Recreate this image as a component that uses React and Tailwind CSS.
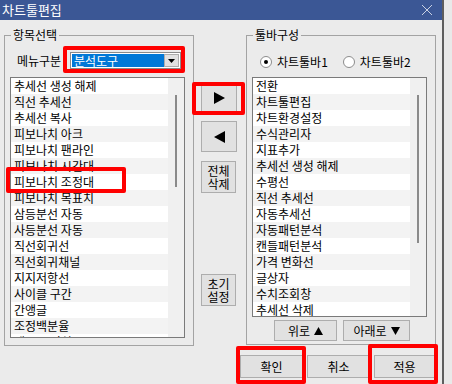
const leftItems = [
  "추세선 생성 해제",
  "직선 추세선",
  "추세선 복사",
  "피보나치 아크",
  "피보나치 팬라인",
  "피보나치 시간대",
  "피보나치 조정대",
  "피보나치 목표치",
  "삼등분선 자동",
  "사등분선 자동",
  "직선회귀선",
  "직선회귀채널",
  "지지저항선",
  "사이클 구간",
  "간앵글",
  "조정백분율",
  "앤드류 피치포크",
];

const rightItems = [
  "전환",
  "차트툴편집",
  "차트환경설정",
  "수식관리자",
  "지표추가",
  "추세선 생성 해제",
  "수평선",
  "직선 추세선",
  "자동추세선",
  "자동패턴분석",
  "캔들패턴분석",
  "가격 변화선",
  "글상자",
  "수치조회창",
  "추세선 삭제",
];

const cx = (...items) => items.filter(Boolean).join(" ");

function ListBox({ items, width, height, thumbTop, thumbHeight }) {
  return (
    <div
      className="flex overflow-hidden border border-[#7a7a7a] bg-white"
      style={{ width, height }}
    >
      <div className="flex min-w-0 flex-1 flex-col">
        {items.map((item, i) => (
          <div
            key={item + i}
            className={cx(
              "h-[16px] shrink-0 whitespace-pre pl-[3px] text-[12px] leading-[16px] text-black",
              i % 2 === 1 ? "bg-[#f3f3f3]" : "bg-white",
            )}
          >
            {item}
          </div>
        ))}
      </div>
      <div className="flex w-[16px] shrink-0 flex-col items-center bg-[#f0f0f0]">
        <div style={{ height: thumbTop }} />
        <div className="w-[2px] bg-[#8a8a8a]" style={{ height: thumbHeight }} />
      </div>
    </div>
  );
}

function Btn({ children, className }) {
  return (
    <div
      className={cx(
        "flex items-center justify-center border border-[#adadad] bg-[#e1e1e1] text-[12px] leading-[14px] text-black",
        className,
      )}
    >
      {children}
    </div>
  );
}

function TwoLine({ top, bottom, className }) {
  return (
    <Btn className={cx("h-[32px] w-[35px] flex-col", className)}>
      <span className="block h-[13px] leading-[13px]">{top}</span>
      <span className="block h-[13px] leading-[13px]">{bottom}</span>
    </Btn>
  );
}

function Radio({ checked, label }) {
  return (
    <div className="flex items-center gap-[5px]">
      <div className="flex h-[12px] w-[12px] items-center justify-center rounded-full border border-[#8c8c8c] bg-white">
        {checked && <div className="h-[4px] w-[4px] rounded-full bg-black" />}
      </div>
      <span className="text-[12px] leading-[14px]">{label}</span>
    </div>
  );
}

function RedBox({ className }) {
  return (
    <div
      className={cx(
        "pointer-events-none absolute rounded-[2px] border-[4px] border-[#ff0000]",
        className,
      )}
    />
  );
}

export default function App() {
  return (
    <div className="relative flex h-[384px] w-[452px] overflow-hidden bg-[#ececec] font-['Noto_Sans_CJK_KR','Noto_Sans',sans-serif] text-black">
      <div className="flex w-[442px] shrink-0 flex-col">
        <div className="flex h-[20px] items-center justify-between bg-[#3b5795] pl-[2px] pr-[9px]">
          <span className="text-[13px] leading-[16px] text-white">차트툴편집</span>
          <svg width="12" height="12" viewBox="0 0 12 12">
            <path d="M1 1L11 11M11 1L1 11" stroke="#c9d1e3" strokeWidth="1" />
          </svg>
        </div>

        <div className="flex flex-1 flex-col bg-[#ebebeb] pt-[15px]">
          <div className="flex">
            {/* left group */}
            <div className="relative ml-[4px] flex h-[311px] w-[190px] flex-col border border-[#a3a3a3] px-[5px] pt-[16px]">
              <span className="absolute left-[6px] top-[-9px] bg-[#ebebeb] px-[2px] text-[12px] leading-[16px]">
                항목선택
              </span>
              <div className="flex h-[17px] items-center pl-[7px]">
                <span className="w-[53px] text-[12px] leading-[14px]">메뉴구분</span>
                <div className="flex h-[17px] w-[111px] border border-[#8a8a8a] bg-white p-[1px]">
                  <div className="flex flex-1 items-center bg-[#0078d7] pl-[2px] text-[12px] leading-[13px] text-white">
                    분석도구
                  </div>
                  <div className="flex w-[15px] items-center justify-center border border-[#adadad] bg-[#e1e1e1]">
                    <svg width="7" height="4" viewBox="0 0 7 4">
                      <path d="M0 0H7L3.5 4Z" fill="#000" />
                    </svg>
                  </div>
                </div>
              </div>
              <div className="mt-[8px]">
                <ListBox items={leftItems} width={175} height={261} thumbTop={17} thumbHeight={92} />
              </div>
            </div>

            {/* middle buttons */}
            <div className="flex w-[52px] flex-col pl-[7px] pt-[47px]">
              <Btn className="h-[31px] w-[36px]">
                <svg width="11" height="12" viewBox="0 0 11 12">
                  <path d="M0 0L11 6L0 12Z" fill="#000" />
                </svg>
              </Btn>
              <Btn className="mt-[8px] h-[31px] w-[36px]">
                <svg width="11" height="12" viewBox="0 0 11 12">
                  <path d="M11 0L0 6L11 12Z" fill="#000" />
                </svg>
              </Btn>
              <TwoLine top="전체" bottom="삭제" className="mt-[9px]" />
              <TwoLine top="초기" bottom="설정" className="mt-[81px]" />
            </div>

            {/* right group */}
            <div className="relative flex h-[310px] w-[190px] flex-col border border-[#a3a3a3] px-[5px] pt-[19px]">
              <span className="absolute left-[6px] top-[-9px] bg-[#ebebeb] px-[2px] text-[12px] leading-[16px]">
                툴바구성
              </span>
              <div className="flex h-[14px] items-center gap-[15px] pl-[8px]">
                <Radio checked label="차트툴바1" />
                <Radio label="차트툴바2" />
              </div>
              <div className="mt-[8px]">
                <ListBox items={rightItems} width={175} height={240} thumbTop={17} thumbHeight={148} />
              </div>
              <div className="mt-[3px] flex gap-[6px] pl-[22px]">
                <Btn className="h-[21px] w-[63px] gap-[4px]">
                  <span>위로</span>
                  <svg width="9" height="8" viewBox="0 0 9 8">
                    <path d="M4.5 0L9 8H0Z" fill="#000" />
                  </svg>
                </Btn>
                <Btn className="h-[21px] w-[67px] gap-[4px]">
                  <span>아래로</span>
                  <svg width="9" height="8" viewBox="0 0 9 8">
                    <path d="M0 0H9L4.5 8Z" fill="#000" />
                  </svg>
                </Btn>
              </div>
            </div>
          </div>

          <div className="mt-[9px] flex gap-[4px] pl-[240px]">
            <Btn className="h-[23px] w-[63px]">확인</Btn>
            <Btn className="h-[23px] w-[63px]">취소</Btn>
            <Btn className="h-[23px] w-[61px]">적용</Btn>
          </div>
        </div>
      </div>
      <div className="w-[2px] shrink-0 bg-[#5e5e5e]" />
      <div className="flex-1 bg-[#e9e9e9]" />

      <RedBox className="left-[63px] top-[46px] h-[27px] w-[122px]" />
      <RedBox className="left-[192px] top-[82px] h-[33px] w-[53px]" />
      <RedBox className="left-[6px] top-[167px] h-[26px] w-[120px]" />
      <RedBox className="left-[236px] top-[346px] h-[38px] w-[70px]" />
      <RedBox className="left-[368px] top-[344px] h-[40px] w-[70px]" />
    </div>
  );
}
